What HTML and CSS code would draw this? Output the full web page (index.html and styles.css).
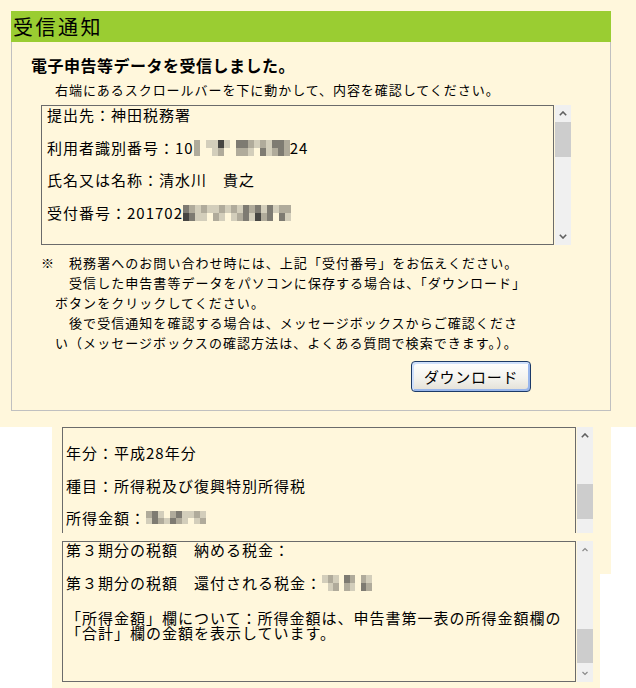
FILE: index.html
```html
<!DOCTYPE html>
<html lang="ja">
<head>
    <meta charset="UTF-8">
    <title>受信通知</title>
    <meta name="viewport" content="width=device-width, initial-scale=1.0">
    <link rel="stylesheet" href="styles.css">
</head>
<body>
    <!-- top capture: the notice panel -->
    <div class="shot shot-top">
        <div class="panel">
            <h1 class="panel-title">受信通知</h1>
            <div class="panel-body">
                <h2 class="lead">電子申告等データを受信しました。</h2>
                <p class="hint">右端にあるスクロールバーを下に動かして、内容を確認してください。</p>
                <div class="viewer">
                    <div class="viewer-text">
                        <p>提出先：神田税務署</p>
                        <p>利用者識別番号：10<span class="mosaic m-id"><span class="k2"></span><span class="k2"></span><span class="k0"></span><span class="k0"></span><span class="k1"></span><span class="k0"></span><span class="k1"></span><span class="k1"></span><span class="k4"></span><span class="k2"></span><span class="k1"></span><span class="k0"></span><span class="k0"></span><span class="k0"></span><span class="k3"></span><span class="k2"></span><span class="k3"></span><span class="k2"></span><span class="k2"></span><span class="k1"></span><span class="k1"></span><span class="k0"></span><span class="k2"></span><span class="k3"></span><span class="k1"></span><span class="k1"></span><span class="k3"></span><span class="k2"></span><span class="k3"></span><span class="k3"></span><span class="k2"></span><span class="k2"></span></span>24</p>
                        <p>氏名又は名称：清水川　貴之</p>
                        <p>受付番号：201702<span class="mosaic m-recv"><span class="k3"></span><span class="k4"></span><span class="k2"></span><span class="k3"></span><span class="k1"></span><span class="k1"></span><span class="k2"></span><span class="k1"></span><span class="k1"></span><span class="k0"></span><span class="k1"></span><span class="k2"></span><span class="k2"></span><span class="k1"></span><span class="k1"></span><span class="k0"></span><span class="k2"></span><span class="k1"></span><span class="k1"></span><span class="k2"></span><span class="k3"></span><span class="k3"></span><span class="k2"></span><span class="k1"></span><span class="k3"></span><span class="k4"></span><span class="k1"></span><span class="k2"></span><span class="k3"></span><span class="k3"></span><span class="k1"></span><span class="k0"></span><span class="k2"></span><span class="k3"></span><span class="k2"></span><span class="k1"></span></span></p>
                    </div>
                    <div class="scrollbar sb-first">
                        <div class="sb-arrow"><svg viewBox="0 0 8 5" width="8" height="5"><polyline points="0.8,4.2 4,1 7.2,4.2" /></svg></div>
                        <div class="sb-thumb"></div>
                        <div class="sb-arrow sb-down"><svg viewBox="0 0 8 5" width="8" height="5"><polyline points="0.8,0.8 4,4 7.2,0.8" /></svg></div>
                    </div>
                </div>
                <div class="notes">
                    <span class="notes-mark">※</span>
                    <div class="notes-text">
                        <p>　税務署へのお問い合わせ時には、上記「受付番号」をお伝えください。</p>
                        <p>　受信した申告書等データをパソコンに保存する場合は、「ダウンロード」<br>ボタンをクリックしてください。</p>
                        <p>　後で受信通知を確認する場合は、メッセージボックスからご確認くださ<br>い（メッセージボックスの確認方法は、よくある質問で検索できます。）。</p>
                    </div>
                </div>
                <button class="dl-button" type="button">ダウンロード</button>
            </div>
        </div>
    </div>

    <!-- second capture: scrolled to the middle -->
    <div class="shot shot-mid">
        <div class="viewer">
            <div class="viewer-text">
                <p>年分：平成28年分</p>
                <p>種目：所得税及び復興特別所得税</p>
                <p>所得金額：<span class="mosaic m-income"><span class="k2"></span><span class="k1"></span><span class="k3"></span><span class="k3"></span><span class="k1"></span><span class="k2"></span><span class="k0"></span><span class="k1"></span><span class="k2"></span><span class="k3"></span><span class="k3"></span><span class="k2"></span><span class="k1"></span><span class="k1"></span><span class="k1"></span><span class="k0"></span><span class="k2"></span><span class="k1"></span><span class="k1"></span><span class="k2"></span></span></p>
            </div>
            <div class="scrollbar sb-second">
                <div class="sb-arrow"><svg viewBox="0 0 8 5" width="8" height="5"><polyline points="0.8,4.2 4,1 7.2,4.2" /></svg></div>
                <div class="sb-thumb"></div>
            </div>
        </div>
    </div>

    <!-- third capture: scrolled to the end -->
    <div class="shot shot-end">
        <div class="viewer">
            <div class="viewer-text">
                <p>第３期分の税額　納める税金：</p>
                <p>第３期分の税額　還付される税金：<span class="mosaic m-refund"><span class="k1"></span><span class="k0"></span><span class="k2"></span><span class="k1"></span><span class="k1"></span><span class="k2"></span><span class="k0"></span><span class="k0"></span><span class="k3"></span><span class="k2"></span><span class="k2"></span><span class="k1"></span><span class="k0"></span><span class="k0"></span><span class="k2"></span><span class="k3"></span><span class="k1"></span><span class="k2"></span></span></p>
                <p class="wrap">「所得金額」欄について：所得金額は、申告書第一表の所得金額欄の<br>「合計」欄の金額を表示しています。</p>
            </div>
            <div class="scrollbar sb-third">
                <div class="sb-arrow"><svg viewBox="0 0 8 5" width="8" height="5"><polyline points="1.5,4 4,1.5 6.5,4" /></svg></div>
                <div class="sb-thumb"></div>
                <div class="sb-arrow sb-down"><svg viewBox="0 0 8 5" width="8" height="5"><polyline points="1.5,1 4,3.5 6.5,1" /></svg></div>
            </div>
        </div>
    </div>
</body>
</html>
```

FILE: styles.css
```css
body {
    margin: 0px;
    padding: 0px;
    width: 636px;
    background-color: #ffffff;
    color: #000000;
    font-family: "Noto Sans CJK JP", "Noto Sans", sans-serif;
    white-space: nowrap;
}

p, h1, h2 {
    margin: 0px;
}

.shot {
    background-color: #fff7dc;
    box-sizing: border-box;
}

/* first capture */

.shot-top {
    height: 427px;
    padding: 11px 0px 0px 11px;
}

.panel {
    width: 600px;
    height: 400px;
    box-sizing: border-box;
    border: 1px solid #c0c0c0;
    border-top: none;
}

.panel-title {
    margin: 0px -1px;
    height: 31px;
    padding-left: 2px;
    background-color: #9acd32;
    font-size: 20px;
    font-weight: normal;
    line-height: 31px;
    letter-spacing: 2.5px;
}

.panel-body {
    padding: 13px 0px 0px 29px;
}

.lead {
    margin-left: -10px;
    font-size: 16px;
    font-weight: bold;
    line-height: 20px;
    letter-spacing: 0.5px;
}

.hint {
    margin: 5px 0px 0px 14px;
    font-size: 13px;
    line-height: 20px;
    letter-spacing: 0.95px;
}

/* text boxes with their scrollbars */

.viewer {
    display: flex;
    height: 140px;
}

.shot-top .viewer {
    margin-top: 5px;
}

.viewer-text {
    width: 513px;
    box-sizing: border-box;
    border: 1px solid #6b6b6b;
    padding-left: 5px;
    display: flex;
    flex-direction: column;
    gap: 14.5px;
    font-size: 15px;
    line-height: 18px;
    letter-spacing: 1px;
    overflow: hidden;
}

.viewer-text p {
    flex: none;
}

.scrollbar {
    width: 16px;
    margin-left: 1px;
    background-color: #f0f0f0;
    display: flex;
    flex-direction: column;
}

.sb-arrow {
    height: 17px;
    display: flex;
    align-items: center;
    justify-content: center;
}

.sb-arrow svg {
    fill: none;
    stroke: #606060;
    stroke-width: 1.6;
}

.sb-down {
    margin-top: auto;
}

.sb-thumb {
    height: 35px;
    background-color: #cdcdcd;
}

.sb-second .sb-thumb {
    margin-top: 40px;
}

.sb-third .sb-thumb {
    margin-top: 71px;
    height: 34px;
}

.sb-third .sb-arrow svg {
    stroke: #8a8a8a;
    stroke-width: 1.2;
}

/* blurred values */

.mosaic {
    display: inline-grid;
    grid-auto-flow: column;
    grid-template-rows: 8px 8px;
    grid-auto-columns: 6px;
    vertical-align: top;
    margin-top: 1px;
}

.m-income {
    grid-template-rows: 7px 6px;
    margin-top: 2px;
}

.m-refund {
    grid-auto-columns: 5.5px;
    margin-top: 0px;
}

.k0 { background-color: transparent; }
.k1 { background-color: #d3cebb; }
.k2 { background-color: #b0ab9b; }
.k3 { background-color: #7e7b72; }
.k4 { background-color: #464542; }

/* notes and button */

.notes {
    display: flex;
    margin-top: 8px;
    font-size: 13px;
    line-height: 20px;
    letter-spacing: 1.05px;
}

.notes-mark {
    width: 14px;
}

.dl-button {
    display: block;
    margin: 8px 0px 0px 370px;
    width: 120px;
    height: 31px;
    padding: 0px;
    border: 1px solid #1c3a68;
    border-radius: 4px;
    background: linear-gradient(#ffffff, #f4f3ee 55%, #e3e0d6);
    box-shadow: inset 2px 2px 0px #cfe0fb, inset -2px -2px 0px #98b6ec;
    font-family: "Noto Sans CJK JP", "Noto Sans", sans-serif;
    font-size: 15px;
    letter-spacing: 0.7px;
    color: #000000;
}

/* second capture */

.shot-mid {
    width: 559px;
    height: 147px;
    margin-left: 52px;
    padding-left: 10px;
    overflow: hidden;
}

.shot-mid .viewer-text {
    width: 514px;
    padding: 16px 0px 0px 3px;
}

/* third capture */

.shot-end {
    position: relative;
    width: 548px;
    height: 155px;
    margin: -41px 0px 0px 52px;
    padding: 8px 0px 0px 10px;
}

.shot-end .viewer {
    height: 141px;
}

.shot-end .viewer-text {
    width: 514px;
    padding: 0px 0px 0px 3px;
    gap: 16.5px;
    line-height: 16px;
    overflow: visible;
}

.shot-end .wrap {
    margin-top: 2.5px;
    line-height: 15px;
}
```
